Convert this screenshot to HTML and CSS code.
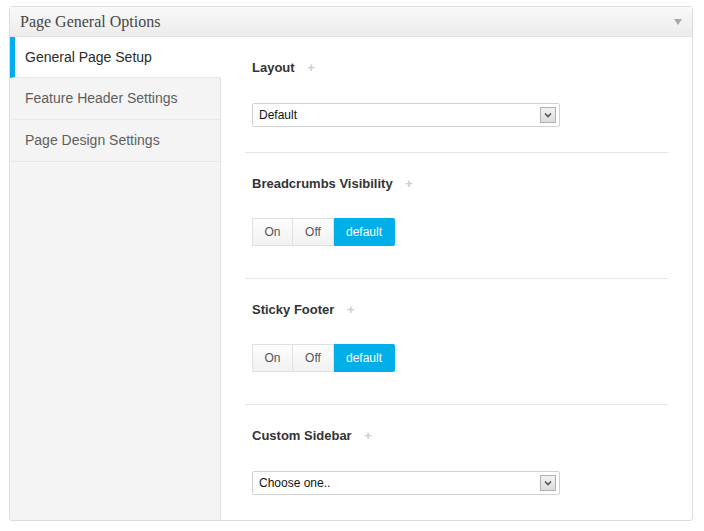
FILE: index.html
```html
<html>
<head>
<meta charset="UTF-8">
<title>Page General Options</title>
<link rel="stylesheet" href="styles.css">
</head>
<body>
	<div class="panel">
		<div class="panel-head">
			<h3>Page General Options</h3>
			<span class="toggle-arrow"></span>
		</div>
		<div class="panel-body">
			<ul class="tabs">
				<li class="active">General Page Setup</li>
				<li>Feature Header Settings</li>
				<li>Page Design Settings</li>
			</ul>
			<div class="options">
				<div class="option">
					<div class="label">Layout <span class="plus">+</span></div>
					<div class="select">
						<span>Default</span>
						<span class="select-arrow"><svg width="8" height="6" viewBox="0 0 8 6"><path d="M1 1.5 L4 4.5 L7 1.5" fill="none" stroke="#555" stroke-width="1.6"/></svg></span>
					</div>
				</div>
				<div class="option">
					<div class="label">Breadcrumbs Visibility <span class="plus">+</span></div>
					<div class="switch">
						<span class="btn">On</span><span class="btn">Off</span><span class="btn on">default</span>
					</div>
				</div>
				<div class="option">
					<div class="label">Sticky Footer <span class="plus">+</span></div>
					<div class="switch">
						<span class="btn">On</span><span class="btn">Off</span><span class="btn on">default</span>
					</div>
				</div>
				<div class="option last">
					<div class="label">Custom Sidebar <span class="plus">+</span></div>
					<div class="select">
						<span>Choose one..</span>
						<span class="select-arrow"><svg width="8" height="6" viewBox="0 0 8 6"><path d="M1 1.5 L4 4.5 L7 1.5" fill="none" stroke="#555" stroke-width="1.6"/></svg></span>
					</div>
				</div>
			</div>
		</div>
	</div>
</body>
</html>
```

FILE: styles.css
```css
body{
	margin: 0;
	background: #fff;
	font-family: Arial, "Liberation Sans", sans-serif;
	color: #333;
}
.panel{
	margin: 6px 0 0 9px;
	width: 682px;
	height: 513px;
	border: 1px solid #dcdcdc;
	border-radius: 3px;
	display: flex;
	flex-direction: column;
	overflow: hidden;
}
.panel-head{
	flex-shrink: 0;
	height: 29px;
	border-bottom: 1px solid #e2e2e2;
	background: linear-gradient(#f9f9f9, #ececec);
	display: flex;
	align-items: center;
	justify-content: space-between;
	padding: 0 10px 0 10px;
}
.panel-head h3{
	margin: 0;
	font-family: "Liberation Serif", serif;
	font-weight: normal;
	font-size: 16px;
	color: #464646;
}
.toggle-arrow{
	width: 0;
	height: 0;
	border-left: 4px solid transparent;
	border-right: 4px solid transparent;
	border-top: 6px solid #a9a9a9;
	margin-top: 1px;
}
.panel-body{
	flex: 1;
	display: flex;
}
.tabs{
	list-style: none;
	margin: 0;
	padding: 0;
	width: 210px;
	background: #f4f4f4;
	border-right: 1px solid #e3e3e3;
}
.tabs li{
	height: 41px;
	line-height: 41px;
	padding-left: 15px;
	font-size: 14px;
	color: #5e5e5e;
	border-bottom: 1px solid #e8e8e8;
}
.tabs li.active{
	background: #fff;
	color: #2a2a2a;
	border-left: 5px solid #00aeef;
	padding-left: 10px;
	margin-right: -1px;
	height: 40px;
	line-height: 40px;
}
.options{
	flex: 1;
	padding: 0 24px;
}
.option{
	padding: 23px 7px 25px 7px;
	border-bottom: 1px solid #e5e5e5;
}
.option:first-child{
	height: 92px;
	padding-bottom: 0;
}
.option + .option{
	height: 77px;
}
.option.last{
	border-bottom: none;
	height: 70px;
	padding-bottom: 0;
}
.label{
	font-size: 13px;
	font-weight: bold;
	line-height: 16px;
	color: #333;
}
.plus{
	color: #cdcdcd;
	font-weight: bold;
	margin-left: 9px;
}
.select{
	margin-top: 27px;
	width: 300px;
	height: 22px;
	border: 1px solid #d2d2d2;
	border-radius: 2px;
	display: flex;
	align-items: center;
	justify-content: space-between;
	padding-left: 6px;
	font-size: 12px;
	color: #111;
}
.select-arrow{
	width: 14px;
	height: 14px;
	margin-right: 3px;
	border: 1px solid #b0b0b0;
	background: linear-gradient(#f2f2f2, #dcdcdc);
	display: flex;
	align-items: center;
	justify-content: center;
}
.switch{
	margin-top: 26px;
	display: flex;
}
.btn{
	height: 26px;
	line-height: 26px;
	width: 39px;
	text-align: center;
	font-size: 12px;
	color: #555;
	background: linear-gradient(#fdfdfd, #f1f1f1);
	border: 1px solid #e0e0e0;
}
.btn + .btn{
	border-left: none;
	width: 40px;
}
.btn.on{
	width: 60px;
	background: #00aee8;
	border-color: #00aee8;
	color: #fff;
	border-radius: 0 2px 2px 0;
}
```
